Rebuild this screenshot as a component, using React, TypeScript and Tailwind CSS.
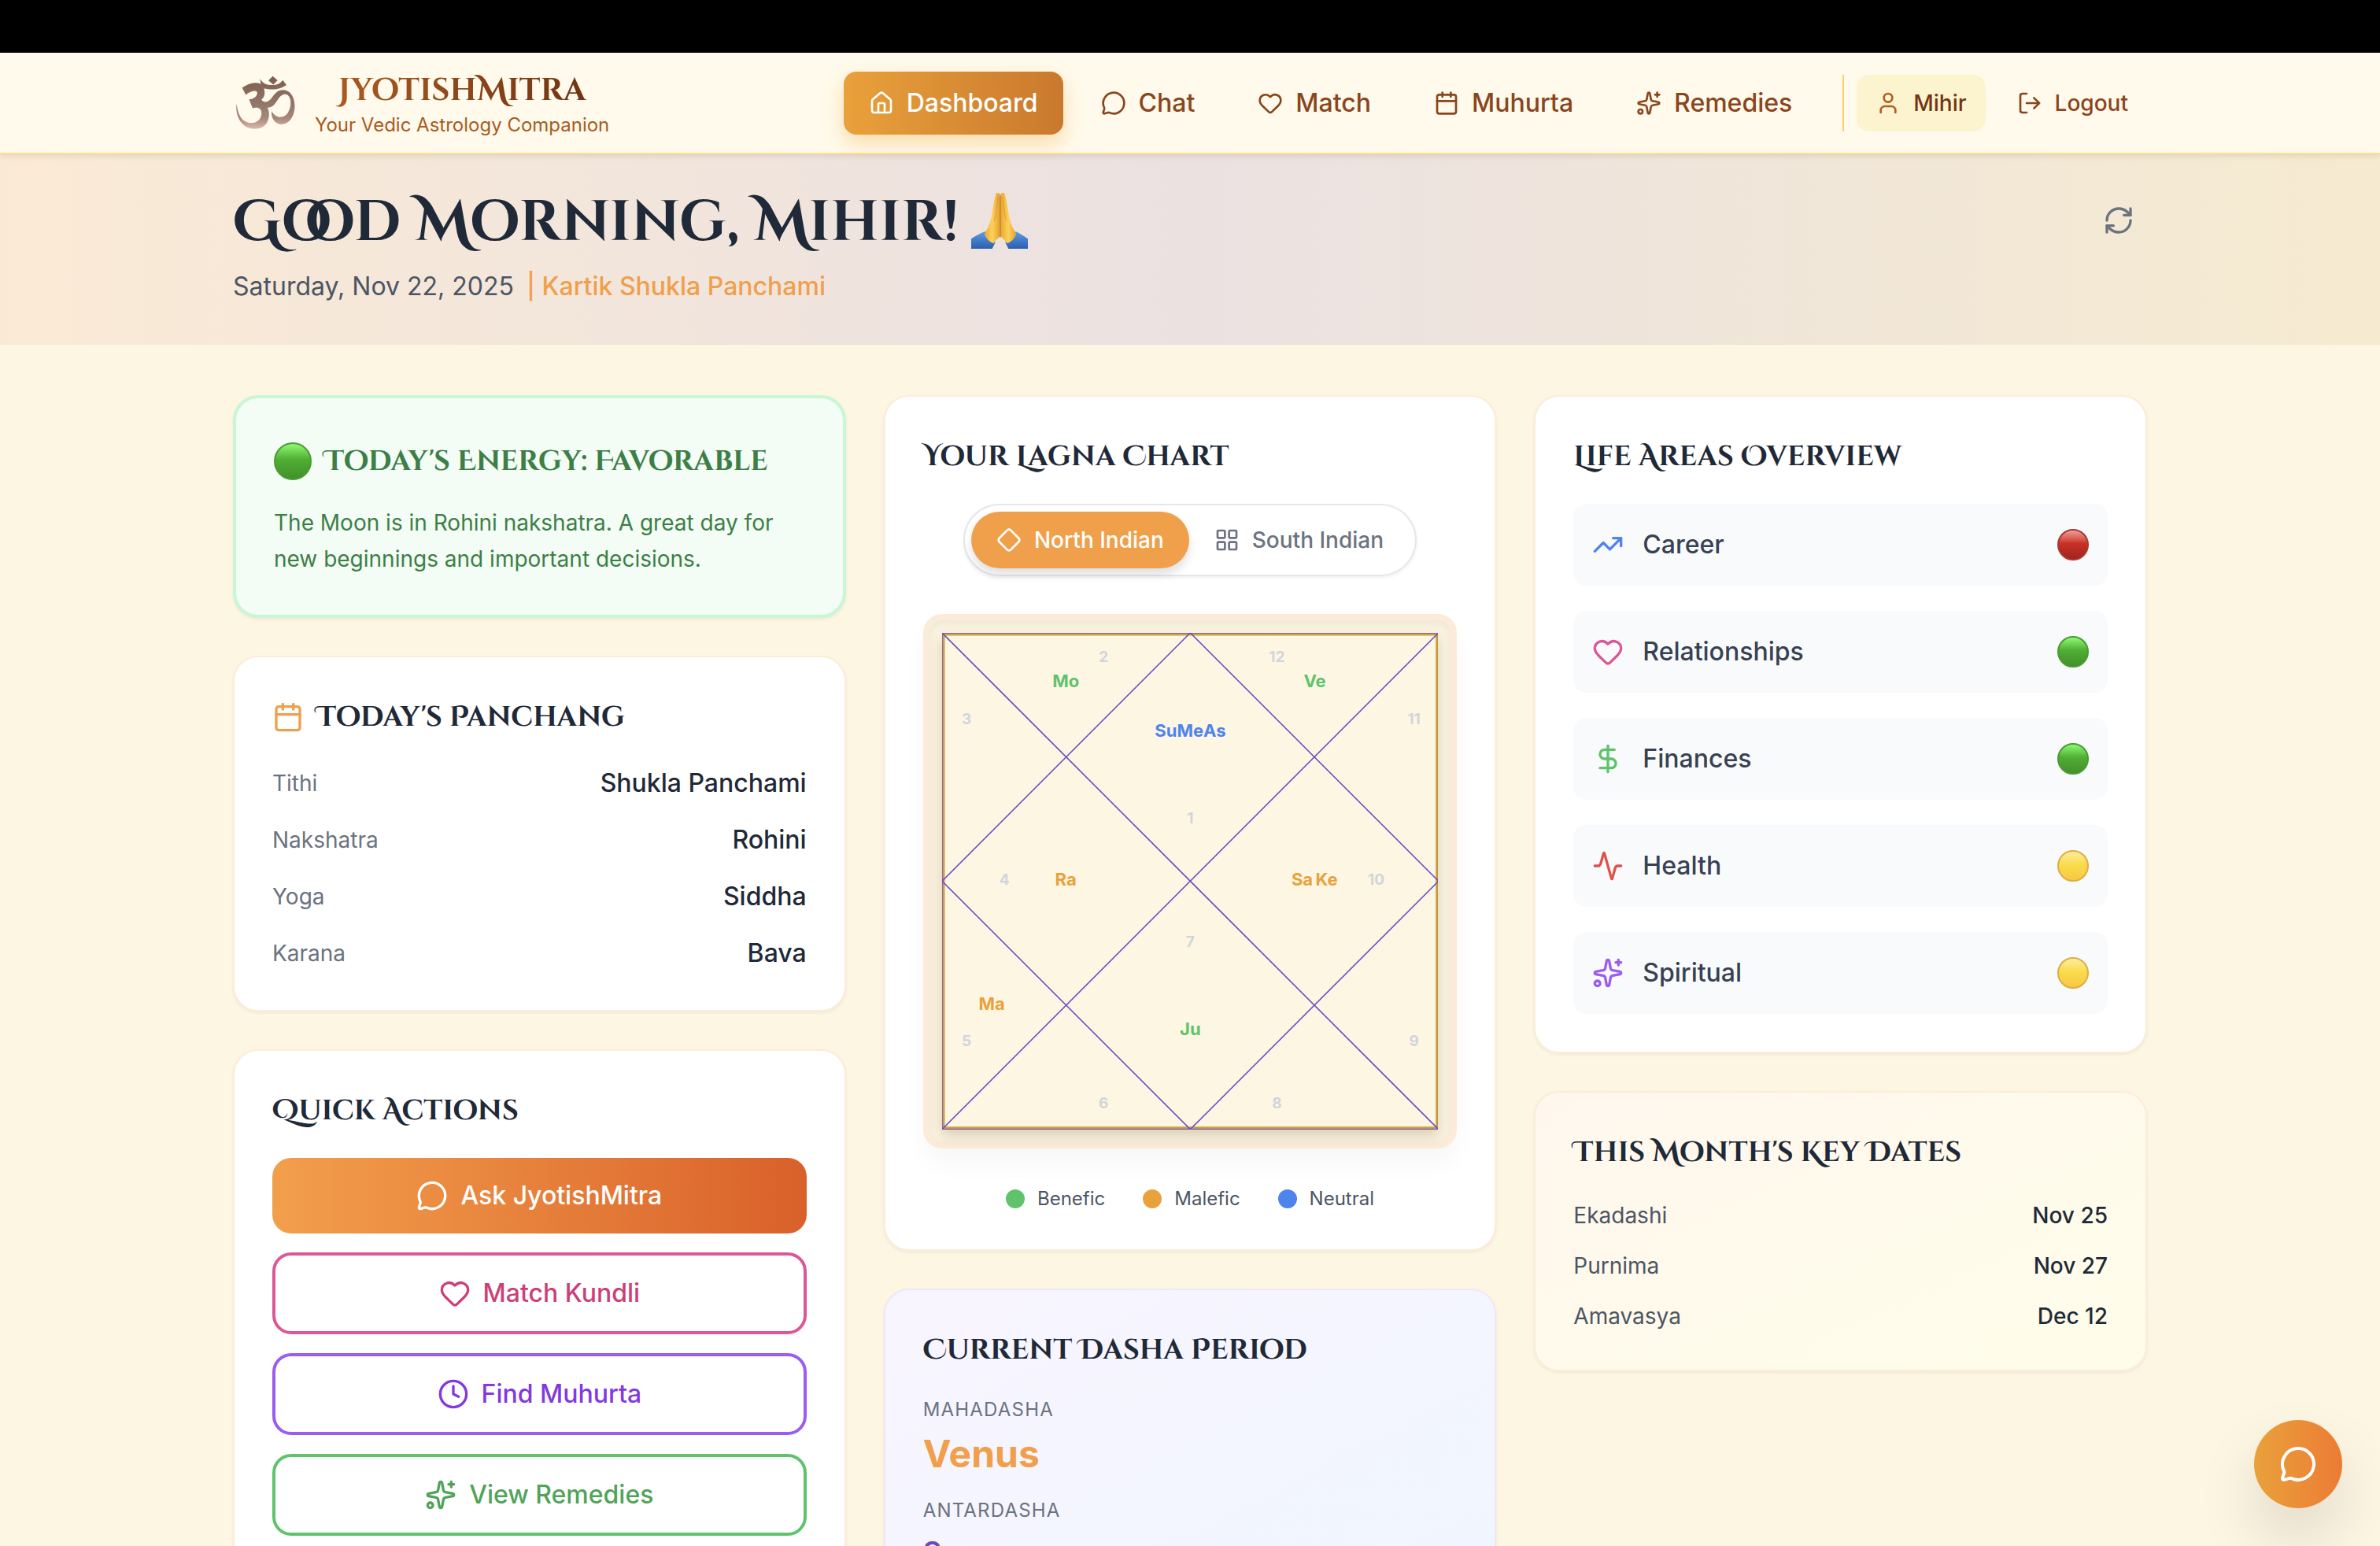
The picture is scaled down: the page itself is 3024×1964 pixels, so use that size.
import { useState } from "react";
import {
  Activity,
  Calendar,
  Clock,
  Diamond,
  DollarSign,
  Heart,
  House,
  LayoutGrid,
  LogOut,
  MessageCircle,
  RefreshCw,
  Sparkles,
  TrendingUp,
  User,
  type LucideIcon,
} from "lucide-react";

type Status = "good" | "fair" | "poor";
type Nature = "benefic" | "malefic" | "neutral";

const navItems: { label: string; icon: LucideIcon }[] = [
  { label: "Dashboard", icon: House },
  { label: "Chat", icon: MessageCircle },
  { label: "Match", icon: Heart },
  { label: "Muhurta", icon: Calendar },
  { label: "Remedies", icon: Sparkles },
];

const panchang = [
  { label: "Tithi", value: "Shukla Panchami" },
  { label: "Nakshatra", value: "Rohini" },
  { label: "Yoga", value: "Siddha" },
  { label: "Karana", value: "Bava" },
];

const quickActions: { label: string; icon: LucideIcon; style: string }[] = [
  { label: "Ask JyotishMitra", icon: MessageCircle, style: "bg-linear-to-r from-[#f29f4c] to-[#d9602a] text-white" },
  { label: "Match Kundli", icon: Heart, style: "border-4 border-[#db5797] text-[#cd3f78]" },
  { label: "Find Muhurta", icon: Clock, style: "border-4 border-[#9b5cf0] text-[#8338e0]" },
  { label: "View Remedies", icon: Sparkles, style: "border-4 border-[#5fc36c] text-[#4fa457]" },
];

const lifeAreas: { label: string; icon: LucideIcon; color: string; status: Status }[] = [
  { label: "Career", icon: TrendingUp, color: "text-[#4f83ee]", status: "poor" },
  { label: "Relationships", icon: Heart, color: "text-[#db5797]", status: "good" },
  { label: "Finances", icon: DollarSign, color: "text-[#5fc36c]", status: "good" },
  { label: "Health", icon: Activity, color: "text-[#de524c]", status: "fair" },
  { label: "Spiritual", icon: Sparkles, color: "text-[#9b5cf0]", status: "fair" },
];

const keyDates = [
  { label: "Ekadashi", value: "Nov 25" },
  { label: "Purnima", value: "Nov 27" },
  { label: "Amavasya", value: "Dec 12" },
];

const natureColors: Record<Nature, string> = {
  benefic: "#5fc36c",
  malefic: "#e9a13b",
  neutral: "#4f83ee",
};

const houses = [
  { n: 1, x: 315, y: 235 },
  { n: 2, x: 205, y: 30 },
  { n: 3, x: 31, y: 109 },
  { n: 4, x: 79, y: 313 },
  { n: 5, x: 31, y: 517 },
  { n: 6, x: 205, y: 596 },
  { n: 7, x: 315, y: 392 },
  { n: 8, x: 425, y: 596 },
  { n: 9, x: 599, y: 517 },
  { n: 10, x: 551, y: 313 },
  { n: 11, x: 599, y: 109 },
  { n: 12, x: 425, y: 30 },
];

const planets: { name: string; x: number; y: number; nature: Nature }[] = [
  { name: "Mo", x: 157, y: 61, nature: "benefic" },
  { name: "Ve", x: 473, y: 61, nature: "benefic" },
  { name: "Su", x: 284, y: 124, nature: "neutral" },
  { name: "Me", x: 315, y: 124, nature: "neutral" },
  { name: "As", x: 346, y: 124, nature: "neutral" },
  { name: "Ra", x: 157, y: 313, nature: "malefic" },
  { name: "Sa", x: 457, y: 313, nature: "malefic" },
  { name: "Ke", x: 488, y: 313, nature: "malefic" },
  { name: "Ma", x: 63, y: 470, nature: "malefic" },
  { name: "Ju", x: 315, y: 502, nature: "benefic" },
];

const cardShadow = "shadow-[0_2px_4px_rgba(0,0,0,0.06)]";
const displayFont = "font-['Cinzel_Decorative','Liberation_Serif',serif] font-bold";

function OmLogo() {
  return (
    <svg viewBox="18 18 246 230" className="h-20 w-21" role="img" aria-label="Om">
      <defs>
        <linearGradient id="om" x1="0" y1="0" x2="0" y2="1">
          <stop offset="0" stopColor="#7d5c4c" />
          <stop offset="0.55" stopColor="#93786a" />
          <stop offset="0.8" stopColor="#a88878" />
          <stop offset="1" stopColor="#dcb9ab" />
        </linearGradient>
      </defs>
      <path
        fill="url(#om)"
        d="M166 33L184 48L168 64L150 49Z M118 42C128 60 145 66 165 66C180 66 195 60 203 47L217 66C205 74 195 78 182 80C160 84 142 80 133 78C139 96 136 110 124 120C132 134 150 130 162 114C175 96 186 84 205 84C232 84 248 112 248 145C247 185 225 214 195 212C172 208 158 185 162 162C172 182 195 193 215 178C234 160 240 118 222 103C210 95 195 103 185 120C172 140 165 150 146 150C154 162 155 185 145 205C130 232 90 236 62 218C38 200 26 165 32 135C34 160 42 188 62 200C90 215 120 205 124 175C127 152 110 146 91 152L78 119C95 118 110 108 108 92C100 82 80 90 66 102L52 76C75 60 98 52 122 62Z"
      />
    </svg>
  );
}

function FoldedHands() {
  return (
    <svg viewBox="24 30 216 216" className="mb-2 size-18" role="img" aria-label="Folded hands">
      <defs>
        <linearGradient id="palm" x1="0" y1="0" x2="1" y2="0">
          <stop offset="0" stopColor="#eaa62e" />
          <stop offset="0.5" stopColor="#fcd25a" />
          <stop offset="1" stopColor="#e79f2b" />
        </linearGradient>
        <linearGradient id="sleeve" x1="0" y1="0" x2="0" y2="1">
          <stop offset="0" stopColor="#5b9be6" />
          <stop offset="1" stopColor="#2c5fae" />
        </linearGradient>
      </defs>
      <path fill="url(#sleeve)" d="M24 246V208C42 196 58 188 76 180L116 222L104 246Z M240 246V208C222 196 210 188 194 180L154 222L166 246Z" />
      <path fill="url(#palm)" d="M117 42C117 30 134 30 134 42V198C126 208 118 210 110 226C96 222 80 208 74 190C92 162 100 138 103 112C108 92 110 64 117 42Z" />
      <path fill="url(#palm)" d="M153 42C153 30 136 30 136 42V198C144 208 152 210 160 226C174 222 190 208 196 190C178 162 170 138 167 112C162 92 160 64 153 42Z" />
      <path stroke="#a86412" strokeWidth="3" fill="none" d="M135 44V202" />
      <path stroke="#d38e24" strokeWidth="2" fill="none" d="M126 50C122 80 120 110 112 140M144 50C148 80 150 110 158 140" />
    </svg>
  );
}

const orbStyles: Record<Status, string> = {
  good: "from-[#8dfb72] via-[#4fae33] to-[#43912b] border-[#4b9a34]",
  fair: "from-[#fdec9a] via-[#fadc4b] to-[#f7c843] border-[#dfae45]",
  poor: "from-[#ee9c96] via-[#c93127] to-[#a0241c] border-[#a83a32]",
};

function Orb({ status, size }: { status: Status; size: string }) {
  return (
    <span
      role="img"
      aria-label={status}
      className={`block shrink-0 rounded-full border-2 bg-linear-to-b via-45% ${orbStyles[status]} ${size}`}
    />
  );
}

function CardTitle({ children }: { children: string }) {
  return <h3 className={`mb-8 text-4xl leading-14 text-[#1f2937] ${displayFont}`}>{children}</h3>;
}

function LagnaChart() {
  return (
    <svg viewBox="0 0 630 630" className="block w-full bg-[#fdf6e3] shadow-[0_8px_16px_rgba(90,60,20,0.2)]">
      <rect x="2" y="2" width="626" height="626" fill="none" stroke="#cda23a" strokeWidth="3" />
      <g fill="none" stroke="#6e50c0" strokeWidth="1.6">
        <rect x="0" y="0" width="630" height="630" />
        <path d="M0 0L630 630M630 0L0 630M315 0L630 315L315 630L0 315Z" />
      </g>
      {houses.map((h) => (
        <text key={h.n} x={h.x} y={h.y + 7} textAnchor="middle" fontSize="19" fontWeight="700" fill="#d1d5db">
          {h.n}
        </text>
      ))}
      {planets.map((p) => (
        <text key={p.name} x={p.x} y={p.y + 8} textAnchor="middle" fontSize="22" fontWeight="700" fill={natureColors[p.nature]}>
          {p.name}
        </text>
      ))}
    </svg>
  );
}

export default function App() {
  const [chartStyle, setChartStyle] = useState<"north" | "south">("north");

  const toggleClass = (active: boolean) =>
    `flex h-18 items-center gap-4 rounded-full px-8 text-[28px] font-medium ${
      active ? "bg-[#f09f4b] text-white shadow-[0_8px_12px_rgba(0,0,0,0.12)]" : "text-[#6b7280]"
    }`;

  return (
    <div className="h-screen overflow-hidden bg-[#fdf6e3] font-[Inter,sans-serif]">
      <div className="h-[67px] bg-black" />

      <header className="relative z-10 border-b-2 border-[#fae28c] bg-[#fffaeb] shadow-[0_2px_8px_rgba(0,0,0,0.1)]">
        <div className="mx-auto flex h-[127px] max-w-[2560px] items-center justify-between px-16">
          <a href="#" className="flex items-center gap-5">
            <OmLogo />
            <div className="text-center">
              <div className={`bg-linear-to-r from-[#b05e22] to-[#6b3113] bg-clip-text text-[40px] leading-14 text-transparent ${displayFont}`}>
                JyotishMitra
              </div>
              <div className="text-2xl text-[#a85a24]">Your Vedic Astrology Companion</div>
            </div>
          </a>

          <nav className="flex items-center gap-4">
            {navItems.map(({ label, icon: Icon }, i) => (
              <a
                key={label}
                href="#"
                className={`flex h-20 items-center gap-4 rounded-2xl px-8 text-[32px] font-medium ${
                  i === 0
                    ? "bg-linear-to-r from-[#e9a13b] to-[#c9792d] text-white shadow-[0_12px_24px_rgba(240,170,60,0.35)]"
                    : "text-[#8a451c]"
                }`}
              >
                <Icon className="size-8" />
                {label}
              </a>
            ))}
            <div className="ml-4 flex items-center gap-4 border-l-2 border-[#f6d36a] pl-4">
              <a href="#" className="flex h-18 items-center gap-4 rounded-2xl bg-[#fcf3cf] px-6 text-[28px] font-medium text-[#733613]">
                <User className="size-8 text-[#b05e22]" />
                Mihir
              </a>
              <button className="flex h-18 items-center gap-4 rounded-2xl px-6 text-[28px] font-medium text-[#8a451c]">
                <LogOut className="size-8" />
                Logout
              </button>
            </div>
          </nav>
        </div>
      </header>

      <section className="bg-linear-to-r from-[#faead5] via-[#ebe1e1] to-[#f6ebd0]">
        <div className="mx-auto flex max-w-[2560px] items-start justify-between px-16 pt-12 pb-[50px]">
          <div>
            <h1 className={`flex items-center gap-4 text-[72px] leading-20 text-[#1f2937] ${displayFont}`}>
              Good Morning, Mihir!
              <FoldedHands />
            </h1>
            <p className="mt-4 text-[32px] leading-12 text-[#4b5563]">
              Saturday, Nov 22, 2025
              <span className="ml-4 font-medium text-[#f09f4b]">| Kartik Shukla Panchami</span>
            </p>
          </div>
          <button aria-label="Refresh" className="p-4 text-[#6b7280]">
            <RefreshCw className="size-10" />
          </button>
        </div>
      </section>

      <main className="mx-auto grid max-w-[2560px] grid-cols-3 items-start gap-12 px-16 py-16">
        <div className="flex flex-col gap-12">
          <section className={`rounded-4xl border-4 border-[#c8f7d4] bg-[#f3fcf5] p-12 ${cardShadow}`}>
            <div className="mb-6 flex h-[63px] items-center gap-4">
              <Orb status="good" size="size-12" />
              <h3 className={`text-4xl leading-14 text-[#3c7f46] ${displayFont}`}>Today's Energy: Favorable</h3>
            </div>
            <p className="text-[28px] leading-[46px] text-[#3c7f46]">
              The Moon is in Rohini nakshatra. A great day for new beginnings and important decisions.
            </p>
          </section>

          <section className={`rounded-4xl border-2 border-[#fdecd9] bg-white p-12 ${cardShadow}`}>
            <div className="flex items-start gap-4">
              <Calendar className="mt-2 size-10 text-[#f09f4b]" />
              <CardTitle>Today's Panchang</CardTitle>
            </div>
            <dl className="flex flex-col gap-6">
              {panchang.map((row) => (
                <div key={row.label} className="flex items-center justify-between leading-12">
                  <dt className="text-[28px] text-[#6b7280]">{row.label}</dt>
                  <dd className="text-[32px] font-medium text-[#1f2937]">{row.value}</dd>
                </div>
              ))}
            </dl>
          </section>

          <section className={`rounded-4xl border-2 border-[#fdecd9] bg-white p-12 ${cardShadow}`}>
            <CardTitle>Quick Actions</CardTitle>
            <div className="flex flex-col gap-6">
              {quickActions.map(({ label, icon: Icon, style }) => (
                <button
                  key={label}
                  className={`flex items-center justify-center gap-4 rounded-3xl py-6 text-[32px] leading-12 font-medium ${style}`}
                >
                  <Icon className="size-10" />
                  {label}
                </button>
              ))}
            </div>
          </section>
        </div>

        <div className="flex flex-col gap-12">
          <section className={`rounded-4xl border-2 border-[#fdecd9] bg-white p-12 ${cardShadow}`}>
            <CardTitle>Your Lagna Chart</CardTitle>
            <div className="flex justify-center">
              <div className="flex rounded-full border-2 border-[#e5e7eb] p-2 shadow-[0_2px_4px_rgba(0,0,0,0.06)]">
                <button onClick={() => setChartStyle("north")} className={toggleClass(chartStyle === "north")}>
                  <Diamond className="size-8" />
                  North Indian
                </button>
                <button onClick={() => setChartStyle("south")} className={toggleClass(chartStyle === "south")}>
                  <LayoutGrid className="size-8" />
                  South Indian
                </button>
              </div>
            </div>
            <div className="mt-12 rounded-3xl border-8 border-[#fcebd8] bg-[#fbf4e1] p-4 shadow-[0_20px_30px_rgba(0,0,0,0.03),inset_0_4px_12px_rgba(0,0,0,0.06)]">
              <LagnaChart />
            </div>
            <div className="mt-12 flex justify-center gap-12 text-2xl text-[#4b5563]">
              <span className="flex items-center gap-4">
                <span className="size-6 rounded-full bg-[#5fc36c]" />
                Benefic
              </span>
              <span className="flex items-center gap-4">
                <span className="size-6 rounded-full bg-[#e9a13b]" />
                Malefic
              </span>
              <span className="flex items-center gap-4">
                <span className="size-6 rounded-full bg-[#4f83ee]" />
                Neutral
              </span>
            </div>
          </section>

          <section className={`rounded-4xl border-2 border-[#f0e6fb] bg-linear-to-br from-[#f9f5ff] to-[#eff6ff] p-12 ${cardShadow}`}>
            <CardTitle>Current Dasha Period</CardTitle>
            <div className="flex flex-col gap-6">
              <div>
                <p className="text-2xl tracking-wider text-[#6b7280] uppercase">Mahadasha</p>
                <p className="mt-2 text-5xl leading-16 font-bold text-[#f09f4b]">Venus</p>
              </div>
              <div>
                <p className="text-2xl tracking-wider text-[#6b7280] uppercase">Antardasha</p>
                <p className="mt-2 text-4xl leading-14 font-semibold text-[#6a48bd]">Sun</p>
              </div>
            </div>
          </section>
        </div>

        <div className="flex flex-col gap-12">
          <section className={`rounded-4xl border-2 border-[#fdecd9] bg-white p-12 ${cardShadow}`}>
            <CardTitle>Life Areas Overview</CardTitle>
            <ul className="flex flex-col gap-8">
              {lifeAreas.map(({ label, icon: Icon, color, status }) => (
                <li key={label} className="flex h-26 items-center gap-6 rounded-2xl bg-[#f9fafc] px-6">
                  <Icon className={`size-10 ${color}`} />
                  <span className="flex-1 text-[32px] font-medium text-[#374151]">{label}</span>
                  <Orb status={status} size="size-10" />
                </li>
              ))}
            </ul>
          </section>

          <section className={`rounded-4xl border-2 border-[#fdecd9] bg-linear-to-br from-[#fff7ee] to-[#fefde9] p-12 ${cardShadow}`}>
            <CardTitle>This Month's Key Dates</CardTitle>
            <dl className="flex flex-col gap-6 text-[28px] leading-10">
              {keyDates.map((row) => (
                <div key={row.label} className="flex justify-between">
                  <dt className="text-[#4b5563]">{row.label}</dt>
                  <dd className="font-medium text-[#1f2937]">{row.value}</dd>
                </div>
              ))}
            </dl>
          </section>
        </div>
      </main>

      <button
        aria-label="Open chat"
        className="fixed right-12 bottom-12 flex size-28 items-center justify-center rounded-full bg-linear-to-r from-[#e9a13b] to-[#ec7b35] text-white shadow-[0_40px_80px_rgba(0,0,0,0.12)]"
      >
        <MessageCircle className="size-12" />
      </button>
    </div>
  );
}
